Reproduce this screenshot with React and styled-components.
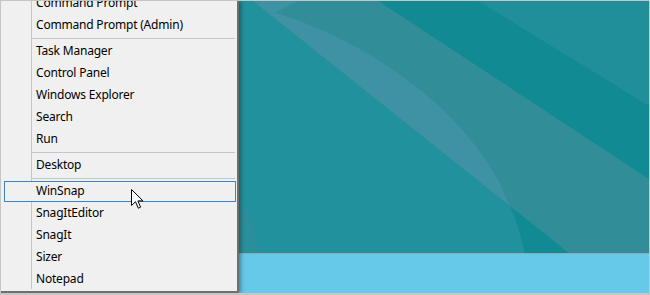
import React from "react";
import styled, { createGlobalStyle } from "styled-components";

const menuItems = [
    "Command Prompt",
    "Command Prompt (Admin)",
    "-",
    "Task Manager",
    "Control Panel",
    "Windows Explorer",
    "Search",
    "Run",
    "-",
    "Desktop",
    "-",
    "WinSnap",
    "SnagItEditor",
    "SnagIt",
    "Sizer",
    "Notepad",
];

const App = () => {
    return (
        <>
            <GlobalStyle />
            <Frame>
                <Menu>
                    <List>
                        {menuItems.map((item, i) =>
                            item === "-" ? (
                                <Separator key={i} />
                            ) : (
                                <Item key={i} $active={item === "WinSnap"}>
                                    {item}
                                </Item>
                            )
                        )}
                    </List>
                    <Cursor width="13" height="21" viewBox="0 0 13 21">
                        <path
                            d="M0.5 0.5 L0.5 16.5 L4.5 12.7 L7.3 19.2 L9.6 18.2 L6.9 11.9 L12 11.9 Z"
                            fill="#fff"
                            stroke="#000"
                            strokeWidth="1"
                            strokeLinejoin="miter"
                        />
                    </Cursor>
                </Menu>
                <Desktop>
                    <Wallpaper>
                        <svg width="410" height="252" viewBox="0 0 410 252">
                            <rect width="410" height="252" fill="#22919e" />
                            <path d="M0 195 Q14 215 19.5 253 L0 253 Z" fill="#2a8f9b" />
                            <path d="M237.7 -1 L411 -1 L411 105.7 Z" fill="#218f9a" />
                            <path d="M137.7 -1 L237.7 -1 L411 105.7 L411 179 Z" fill="#118a94" />
                            <path d="M12.7 -1 L137.7 -1 L411 179 L411 253 L331 253 Z" fill="#318e98" />
                            <path d="M271 205 Q280 226 286 253 L331 253 Z" fill="#118a94" />
                            <path
                                d="M12.7 -1 L61 -1 L36 11.7 C125 38 235 110 271 205 Z"
                                fill="#3e92a3"
                            />
                        </svg>
                    </Wallpaper>
                    <Taskbar />
                </Desktop>
            </Frame>
        </>
    );
};

const GlobalStyle = createGlobalStyle`
    body {
        margin: 0;
        overflow: hidden;
        background: #ffffff;
    }
`;

const Frame = styled.div`
    display: flex;
    width: 650px;
    height: 295px;
    box-sizing: border-box;
    overflow: hidden;

    border: 1px solid #c6c6c6;
    border-bottom-width: 2px;
    background-color: #f0f0f0;
`;

const Menu = styled.div`
    position: relative;
    z-index: 1;
    flex: none;
    width: 238px;
    box-sizing: border-box;
    overflow: hidden;

    border-right: 2px solid #6e6e6e;
    border-bottom: 2px solid #6e6e6e;
    background-color: #f0f0f0;
    box-shadow: 2px 0 4px rgba(0, 0, 0, 0.35);
`;

const List = styled.ul`
    margin: -10px 0 0;
    padding: 0;
    list-style: none;

    background: linear-gradient(
        to right,
        transparent 30px,
        #c6c6c6 30px,
        #c6c6c6 31px,
        transparent 31px
    );
`;

const Item = styled.li`
    position: relative;
    z-index: 0;
    height: 22px;
    box-sizing: border-box;
    padding: 1px 0 0 35px;

    font-family: "Noto Sans", "Open Sans", sans-serif;
    font-size: 12px;
    letter-spacing: -0.2px;
    line-height: 22px;
    color: #000;
    white-space: nowrap;

    &::before {
        content: "";
        display: ${({ $active }) => ($active ? "block" : "none")};
        position: absolute;
        z-index: -1;
        top: 2px;
        bottom: -1px;
        left: 3px;
        right: 1px;
        border: 1px solid #3a85c4;
        background-color: #f0f0f0;
    }
`;

const Separator = styled.li`
    height: 4px;
    box-sizing: border-box;
    margin: 0 2px 0 31px;
    border-bottom: 1px solid #c6c6c6;
`;

const Cursor = styled.svg`
    position: absolute;
    left: 130px;
    top: 188px;
`;

const Desktop = styled.div`
    display: flex;
    flex-direction: column;
    flex: 1;
    min-width: 0;
`;

const Wallpaper = styled.div`
    flex: 1;
    overflow: hidden;
    background-color: #22919e;

    svg {
        display: block;
    }
`;

const Taskbar = styled.div`
    height: 39px;
    border-top: 1px solid #94a6b3;
    background-color: #66c9ea;
`;

export default App;
